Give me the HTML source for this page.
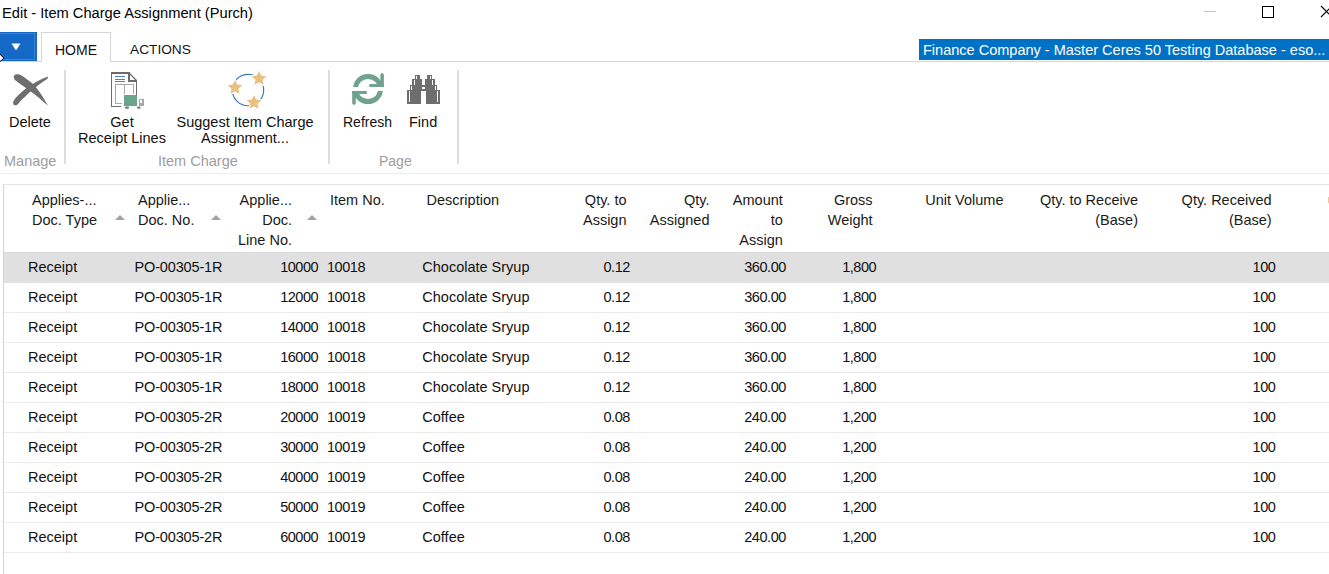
<!DOCTYPE html>
<html><head><meta charset="utf-8">
<style>
html,body{margin:0;padding:0;background:#fff;width:1329px;height:574px;overflow:hidden;position:relative;font-family:"Liberation Sans",sans-serif;color:#000}
.a{position:absolute;white-space:nowrap;line-height:20px}
.r{text-align:right}
.c{text-align:center}
.lbl{font-size:14.5px;color:#111}
.grp{font-size:14.5px;color:#9d9d9d}
.hd{font-size:14.5px;color:#1a1a1a}
.row{position:absolute;left:4px;width:1325px;height:31px;border-bottom:1px solid #ebebeb;box-sizing:border-box}
.cell{position:absolute;top:0;line-height:30px;font-size:14.5px;white-space:nowrap;color:#111}
.n{letter-spacing:-0.45px}
.tri{position:absolute;width:0;height:0;border-left:5px solid transparent;border-right:5px solid transparent;border-bottom:5px solid #a0a0a0}
</style></head>
<body>
<!-- title bar -->
<div class="a" style="left:2px;top:2.5px;font-size:14.67px;color:#000">Edit - Item Charge Assignment (Purch)</div>
<div style="position:absolute;left:1204px;top:11px;width:12px;height:1px;background:#c4c4c4"></div>
<div style="position:absolute;left:1262px;top:6px;width:10px;height:10px;border:1px solid #000"></div>
<svg style="position:absolute;left:1320px;top:5px" width="12" height="14"><path d="M1 1 L12 12 M1 12 L12 1" stroke="#000" stroke-width="1.1" fill="none"/></svg>

<!-- tabs -->
<div style="position:absolute;left:0;top:32px;width:37px;height:29px;background:#1469c6"></div>
<div style="position:absolute;left:-1px;top:33px;width:36px;height:27px;border:1px solid #3a83d2;box-sizing:border-box"></div>
<svg style="position:absolute;left:11px;top:43px" width="11" height="9"><path d="M0.5 0.5 L9.5 0.5 L5 7.5 Z" fill="#fff"/></svg>
<div style="position:absolute;left:0px;top:61px;width:1329px;height:1px;background:#d6d6d6"></div>
<div style="position:absolute;left:41px;top:32px;width:70px;height:30px;border:1px solid #d6d6d6;border-bottom:none;box-sizing:border-box;background:#fff"></div>
<div class="a" style="left:55px;top:40px;font-size:14px;color:#111">HOME</div>
<div class="a" style="left:130px;top:40px;font-size:13.7px;color:#111">ACTIONS</div>
<div style="position:absolute;left:919px;top:39px;width:410px;height:21px;background:#0072c6"></div>
<div class="a" style="left:923px;top:40px;font-size:14.53px;color:#fff">Finance Company - Master Ceres 50 Testing Database - eso...</div>
<!-- cursor -->
<svg style="position:absolute;left:0;top:53px" width="6" height="10"><path d="M-1 0.5 L4 5 L-1 9.5" fill="#fff" stroke="#000" stroke-width="1"/></svg>

<!-- ribbon -->
<div style="position:absolute;left:0;top:173px;width:1329px;height:1px;background:#ededed"></div>
<div style="position:absolute;left:64px;top:70px;width:2px;height:94px;background:#dcdcdc"></div>
<div style="position:absolute;left:328px;top:70px;width:2px;height:94px;background:#dcdcdc"></div>
<div style="position:absolute;left:457px;top:70px;width:2px;height:94px;background:#dcdcdc"></div>

<div class="a lbl" style="left:9px;top:111.5px">Delete</div>
<div class="a lbl c" style="left:70px;top:113.5px;width:104px;line-height:16px">Get<br>Receipt Lines</div>
<div class="a lbl c" style="left:170px;top:113.5px;width:150px;line-height:16px">Suggest Item Charge<br>Assignment...</div>
<div class="a lbl" style="left:343px;top:111.5px;font-size:14px">Refresh</div>
<div class="a lbl" style="left:409px;top:111.5px">Find</div>
<div class="a grp" style="left:4px;top:151px">Manage</div>
<div class="a grp" style="left:158px;top:151px">Item Charge</div>
<div class="a grp" style="left:379px;top:151px;font-size:14px">Page</div>

<!-- icons -->
<svg style="position:absolute;left:0;top:0" width="1329" height="574">
<g fill="#6e6e6e" transform="translate(5,68) scale(0.07669)">
<path d="M115,125 C105,95 135,75 170,82 C210,90 260,125 350,195 C420,255 500,380 560,492 C480,420 400,350 300,280 C230,230 170,185 130,155 C120,145 117,135 115,125 Z"/>
<path d="M105,455 C110,410 180,340 280,260 C370,195 460,150 562,112 L555,140 C470,190 400,250 335,305 C260,370 200,430 170,470 C150,495 110,495 105,455 Z"/>
</g>
<g shape-rendering="crispEdges" fill="#6b6b6b">
<rect x="111" y="72" width="17.5" height="2"/>
<rect x="111" y="72" width="1" height="35"/>
<rect x="111" y="106" width="10" height="1"/>
<rect x="136" y="80" width="1" height="16"/>
<rect x="128" y="72" width="2" height="9"/>
<rect x="128" y="80" width="9" height="2"/>
</g>
<path d="M129.5 73.5 L136.5 80.5" stroke="#6b6b6b" stroke-width="1.2"/>
<g fill="#4a7fc0" shape-rendering="crispEdges"><rect x="115" y="76" width="10" height="1"/><rect x="115" y="79" width="10" height="1"/><rect x="115" y="81" width="10" height="1"/></g>
<path d="M121.5 103.5 L115.5 103.5 L115.5 84.5 L133.5 84.5 L133.5 94 M124.5 84.5 L124.5 94" fill="none" stroke="#a8a8a8" stroke-width="1" shape-rendering="crispEdges"/>
<rect x="124" y="95" width="13" height="11" fill="#6aa48a" shape-rendering="crispEdges"/>
<g shape-rendering="crispEdges"><rect x="139" y="99" width="5" height="7" fill="#a8a8a8"/><rect x="140" y="100" width="2" height="3" fill="#fff"/></g>
<g fill="#7a7a7a"><rect x="125" y="106.5" width="4" height="2.2" rx="1"/><rect x="137" y="106.5" width="3.5" height="2.2" rx="1"/></g>
<circle cx="248" cy="90" r="15.7" fill="none" stroke="#3b74bb" stroke-width="1.15"/>
<polygon points="235.00,79.90 237.17,84.61 242.32,85.22 238.52,88.74 239.53,93.83 235.00,91.30 230.47,93.83 231.48,88.74 227.68,85.22 232.83,84.61" fill="#e9c080" stroke="#fff" stroke-width="2.2" paint-order="stroke"/>
<polygon points="259.00,70.90 261.17,75.61 266.32,76.22 262.52,79.74 263.53,84.83 259.00,82.30 254.47,84.83 255.48,79.74 251.68,76.22 256.83,75.61" fill="#e9c080" stroke="#fff" stroke-width="2.2" paint-order="stroke"/>
<polygon points="254.00,94.90 256.17,99.61 261.32,100.22 257.52,103.74 258.53,108.83 254.00,106.30 249.47,108.83 250.48,103.74 246.68,100.22 251.83,99.61" fill="#e9c080" stroke="#fff" stroke-width="2.2" paint-order="stroke"/>
<defs><clipPath id="ct"><rect x="340" y="60" width="60" height="27"/></clipPath><clipPath id="cb"><rect x="340" y="91" width="60" height="27"/></clipPath></defs>
<g fill="#6fa38e">
<circle cx="368" cy="89" r="12.6" fill="none" stroke="#6fa38e" stroke-width="5" clip-path="url(#ct)"/>
<circle cx="368" cy="89" r="12.6" fill="none" stroke="#6fa38e" stroke-width="5" clip-path="url(#cb)"/>
<path d="M380.3 87 L380.3 74.5 L382 72.8 L383.9 74.5 L383.9 87 Z"/><rect x="369.3" y="84" width="14.6" height="3"/>
<path d="M352.2 91 L355.8 91 L355.8 103.5 L354 105.3 L352.2 103.5 Z"/><rect x="352.2" y="91" width="14.6" height="3"/>
</g>
<g shape-rendering="crispEdges">
<rect x="407.00" y="90" width="14" height="14" fill="#6e6e6e"/>
<rect x="410.00" y="85" width="12" height="5" fill="#6e6e6e"/>
<rect x="412.00" y="79" width="10" height="6" fill="#6e6e6e"/>
<rect x="415.00" y="75" width="5" height="4" fill="#6e6e6e"/>
<rect x="408.70" y="91" width="1.5" height="11" fill="#fff"/>
<rect x="411.00" y="86" width="1.2" height="4" fill="#fff"/>
<rect x="414.00" y="80" width="1.3" height="5" fill="#fff"/>
<rect x="416.00" y="76" width="1.1" height="3" fill="#fff"/>
<rect x="426.10" y="90" width="14" height="14" fill="#6e6e6e"/>
<rect x="425.10" y="85" width="12" height="5" fill="#6e6e6e"/>
<rect x="425.10" y="79" width="10" height="6" fill="#6e6e6e"/>
<rect x="427.10" y="75" width="5" height="4" fill="#6e6e6e"/>
<rect x="436.90" y="91" width="1.5" height="11" fill="#fff"/>
<rect x="434.90" y="86" width="1.2" height="4" fill="#fff"/>
<rect x="431.80" y="80" width="1.3" height="5" fill="#fff"/>
<rect x="430.00" y="76" width="1.1" height="3" fill="#fff"/>
<rect x="421" y="85" width="5.2" height="6" fill="#6e6e6e"/><rect x="422" y="86.8" width="3.2" height="2.4" fill="#fff"/>
</g>
</svg>
<!-- /icons -->
<!-- table -->
<div style="position:absolute;left:3px;top:184px;width:1326px;height:390px;border-left:1px solid #d4d4d4;border-top:1px solid #e4e4e4;box-sizing:border-box"></div>
<!-- header -->
<div class="a hd" style="left:32px;top:190px">Applies-...<br>Doc. Type</div>
<div class="a hd" style="left:138px;top:190px">Applie...<br>Doc. No.</div>
<div class="a hd r" style="right:1037px;top:190px">Applie...<br>Doc.<br>Line No.</div>
<div class="a hd" style="left:330px;top:190px">Item No.</div>
<div class="a hd" style="left:426.5px;top:190px">Description</div>
<div class="a hd r" style="right:702.5px;top:190px">Qty. to<br>Assign</div>
<div class="a hd r" style="right:619.5px;top:190px">Qty.<br>Assigned</div>
<div class="a hd r" style="right:546.2px;top:190px">Amount<br>to<br>Assign</div>
<div class="a hd r" style="right:456.4px;top:190px">Gross<br>Weight</div>
<div class="a hd" style="left:925.3px;top:190px">Unit Volume</div>
<div class="a hd r" style="right:191px;top:190px">Qty. to Receive<br>(Base)</div>
<div class="a hd r" style="right:57.40000000000009px;top:190px">Qty. Received<br>(Base)</div>
<div class="tri" style="left:114.5px;top:215px"></div>
<div class="tri" style="left:210.5px;top:215px"></div>
<div class="tri" style="left:306.5px;top:215px"></div>
<div style="position:absolute;left:1328px;top:197px;width:1px;height:6px;background:#f7c88c"></div>
<!-- rows -->
<div class="row" style="top:252px;background:#e0e0e0;border-top:1px solid #d9d9d9;border-bottom-color:#e0e0e0;"></div>
<div class="cell" style="left:28px;top:252px">Receipt</div>
<div class="cell" style="left:134.5px;top:252px;letter-spacing:-0.15px">PO-00305-1R</div>
<div class="cell r n" style="right:1010.8000000000001px;top:252px">10000</div>
<div class="cell n" style="left:327px;top:252px">10018</div>
<div class="cell" style="left:422.3px;top:252px">Chocolate Sryup</div>
<div class="cell r n" style="right:699.1px;top:252px">0.12</div>
<div class="cell r n" style="right:543.1px;top:252px">360.00</div>
<div class="cell r n" style="right:452.80000000000007px;top:252px">1,800</div>
<div class="cell r n" style="right:53.6px;top:252px">100</div>
<div class="row" style="top:282px;"></div>
<div class="cell" style="left:28px;top:282px">Receipt</div>
<div class="cell" style="left:134.5px;top:282px;letter-spacing:-0.15px">PO-00305-1R</div>
<div class="cell r n" style="right:1010.8000000000001px;top:282px">12000</div>
<div class="cell n" style="left:327px;top:282px">10018</div>
<div class="cell" style="left:422.3px;top:282px">Chocolate Sryup</div>
<div class="cell r n" style="right:699.1px;top:282px">0.12</div>
<div class="cell r n" style="right:543.1px;top:282px">360.00</div>
<div class="cell r n" style="right:452.80000000000007px;top:282px">1,800</div>
<div class="cell r n" style="right:53.6px;top:282px">100</div>
<div class="row" style="top:312px;"></div>
<div class="cell" style="left:28px;top:312px">Receipt</div>
<div class="cell" style="left:134.5px;top:312px;letter-spacing:-0.15px">PO-00305-1R</div>
<div class="cell r n" style="right:1010.8000000000001px;top:312px">14000</div>
<div class="cell n" style="left:327px;top:312px">10018</div>
<div class="cell" style="left:422.3px;top:312px">Chocolate Sryup</div>
<div class="cell r n" style="right:699.1px;top:312px">0.12</div>
<div class="cell r n" style="right:543.1px;top:312px">360.00</div>
<div class="cell r n" style="right:452.80000000000007px;top:312px">1,800</div>
<div class="cell r n" style="right:53.6px;top:312px">100</div>
<div class="row" style="top:342px;"></div>
<div class="cell" style="left:28px;top:342px">Receipt</div>
<div class="cell" style="left:134.5px;top:342px;letter-spacing:-0.15px">PO-00305-1R</div>
<div class="cell r n" style="right:1010.8000000000001px;top:342px">16000</div>
<div class="cell n" style="left:327px;top:342px">10018</div>
<div class="cell" style="left:422.3px;top:342px">Chocolate Sryup</div>
<div class="cell r n" style="right:699.1px;top:342px">0.12</div>
<div class="cell r n" style="right:543.1px;top:342px">360.00</div>
<div class="cell r n" style="right:452.80000000000007px;top:342px">1,800</div>
<div class="cell r n" style="right:53.6px;top:342px">100</div>
<div class="row" style="top:372px;"></div>
<div class="cell" style="left:28px;top:372px">Receipt</div>
<div class="cell" style="left:134.5px;top:372px;letter-spacing:-0.15px">PO-00305-1R</div>
<div class="cell r n" style="right:1010.8000000000001px;top:372px">18000</div>
<div class="cell n" style="left:327px;top:372px">10018</div>
<div class="cell" style="left:422.3px;top:372px">Chocolate Sryup</div>
<div class="cell r n" style="right:699.1px;top:372px">0.12</div>
<div class="cell r n" style="right:543.1px;top:372px">360.00</div>
<div class="cell r n" style="right:452.80000000000007px;top:372px">1,800</div>
<div class="cell r n" style="right:53.6px;top:372px">100</div>
<div class="row" style="top:402px;"></div>
<div class="cell" style="left:28px;top:402px">Receipt</div>
<div class="cell" style="left:134.5px;top:402px;letter-spacing:-0.15px">PO-00305-2R</div>
<div class="cell r n" style="right:1010.8000000000001px;top:402px">20000</div>
<div class="cell n" style="left:327px;top:402px">10019</div>
<div class="cell" style="left:422.3px;top:402px">Coffee</div>
<div class="cell r n" style="right:699.1px;top:402px">0.08</div>
<div class="cell r n" style="right:543.1px;top:402px">240.00</div>
<div class="cell r n" style="right:452.80000000000007px;top:402px">1,200</div>
<div class="cell r n" style="right:53.6px;top:402px">100</div>
<div class="row" style="top:432px;"></div>
<div class="cell" style="left:28px;top:432px">Receipt</div>
<div class="cell" style="left:134.5px;top:432px;letter-spacing:-0.15px">PO-00305-2R</div>
<div class="cell r n" style="right:1010.8000000000001px;top:432px">30000</div>
<div class="cell n" style="left:327px;top:432px">10019</div>
<div class="cell" style="left:422.3px;top:432px">Coffee</div>
<div class="cell r n" style="right:699.1px;top:432px">0.08</div>
<div class="cell r n" style="right:543.1px;top:432px">240.00</div>
<div class="cell r n" style="right:452.80000000000007px;top:432px">1,200</div>
<div class="cell r n" style="right:53.6px;top:432px">100</div>
<div class="row" style="top:462px;"></div>
<div class="cell" style="left:28px;top:462px">Receipt</div>
<div class="cell" style="left:134.5px;top:462px;letter-spacing:-0.15px">PO-00305-2R</div>
<div class="cell r n" style="right:1010.8000000000001px;top:462px">40000</div>
<div class="cell n" style="left:327px;top:462px">10019</div>
<div class="cell" style="left:422.3px;top:462px">Coffee</div>
<div class="cell r n" style="right:699.1px;top:462px">0.08</div>
<div class="cell r n" style="right:543.1px;top:462px">240.00</div>
<div class="cell r n" style="right:452.80000000000007px;top:462px">1,200</div>
<div class="cell r n" style="right:53.6px;top:462px">100</div>
<div class="row" style="top:492px;"></div>
<div class="cell" style="left:28px;top:492px">Receipt</div>
<div class="cell" style="left:134.5px;top:492px;letter-spacing:-0.15px">PO-00305-2R</div>
<div class="cell r n" style="right:1010.8000000000001px;top:492px">50000</div>
<div class="cell n" style="left:327px;top:492px">10019</div>
<div class="cell" style="left:422.3px;top:492px">Coffee</div>
<div class="cell r n" style="right:699.1px;top:492px">0.08</div>
<div class="cell r n" style="right:543.1px;top:492px">240.00</div>
<div class="cell r n" style="right:452.80000000000007px;top:492px">1,200</div>
<div class="cell r n" style="right:53.6px;top:492px">100</div>
<div class="row" style="top:522px;"></div>
<div class="cell" style="left:28px;top:522px">Receipt</div>
<div class="cell" style="left:134.5px;top:522px;letter-spacing:-0.15px">PO-00305-2R</div>
<div class="cell r n" style="right:1010.8000000000001px;top:522px">60000</div>
<div class="cell n" style="left:327px;top:522px">10019</div>
<div class="cell" style="left:422.3px;top:522px">Coffee</div>
<div class="cell r n" style="right:699.1px;top:522px">0.08</div>
<div class="cell r n" style="right:543.1px;top:522px">240.00</div>
<div class="cell r n" style="right:452.80000000000007px;top:522px">1,200</div>
<div class="cell r n" style="right:53.6px;top:522px">100</div>
</body></html>
